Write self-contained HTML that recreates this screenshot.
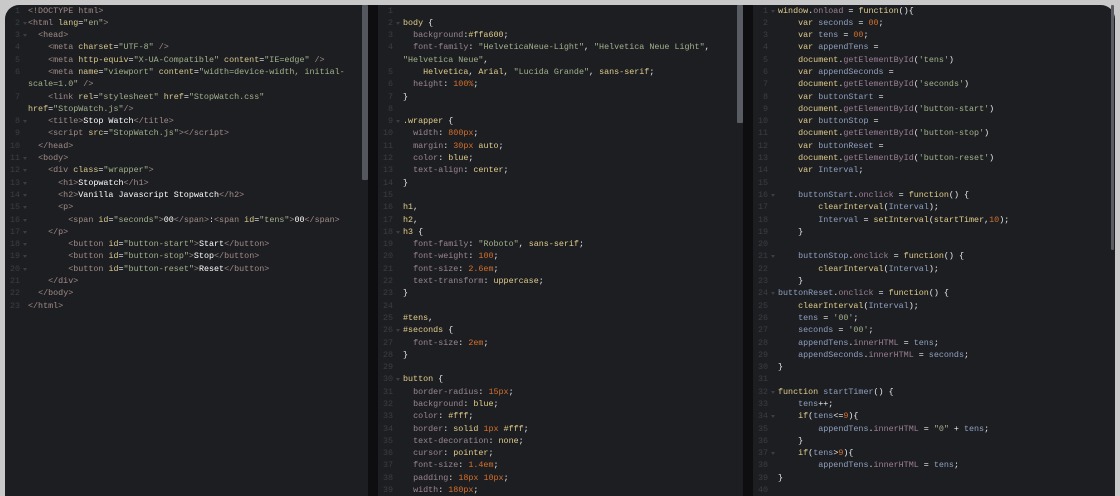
<!DOCTYPE html>
<html><head><meta charset="utf-8"><style>
*{margin:0;padding:0;box-sizing:border-box}
body{width:1120px;height:496px;background:#c9c9c9;position:relative;overflow:hidden;font-family:"Liberation Mono",monospace;font-size:8.4px;color:#e8e8e8}
.p{position:absolute;top:5px;bottom:0;background:#1d1e22;overflow:hidden}
.sep{position:absolute;top:5px;bottom:0;background:#0e0e10}
.sb{position:absolute;background:#5a5c63;border-radius:1px}
.code{position:absolute;top:4.5px;left:0;right:0}
.r{height:12.3px;line-height:12.3px;white-space:pre;position:relative}
.n{position:absolute;text-align:right;color:#3c3d43;width:16px}
.f::after{content:"";position:absolute;right:-7px;top:5px;border-left:2px solid transparent;border-right:2px solid transparent;border-top:3px solid #3c3d43}
.t{color:#a08b87}.a{color:#d8c88c}.s{color:#a2b28b}.w{color:#ffffff}
.k{color:#e0cc8a}.pr{color:#9a8690}.num{color:#d6702c}.v{color:#8fa0bf}.m{color:#9c7f95}
</style></head><body>

<div class="p" style="left:5px;width:363px;border-top-left-radius:14px"></div>
<div class="sb" style="left:362px;top:5px;width:6px;height:175px;background:#55575e"></div>
<div class="sep" style="left:368px;width:10px"></div>
<div class="p" style="left:378px;width:365px"></div>
<div class="sb" style="left:737px;top:5px;width:6px;height:118px"></div>
<div class="sep" style="left:743px;width:10px"></div>
<div class="p" style="left:753px;width:362px;border-top-right-radius:14px"></div>
<div class="sb" style="left:1111px;top:5px;width:3px;height:245px"></div>

<div class="code" style="left:28px;width:330px">
<div class="r"><span class="n" style="left:-24px">1</span><span class="t">&lt;!DOCTYPE html&gt;</span></div>
<div class="r"><span class="n f" style="left:-24px">2</span><span class="t">&lt;html </span><span class="a">lang</span>=<span class="s">"en"</span><span class="t">&gt;</span></div>
<div class="r"><span class="n f" style="left:-24px">3</span>  <span class="t">&lt;head&gt;</span></div>
<div class="r"><span class="n" style="left:-24px">4</span>    <span class="t">&lt;meta </span><span class="a">charset</span>=<span class="s">"UTF-8"</span><span class="t"> /&gt;</span></div>
<div class="r"><span class="n" style="left:-24px">5</span>    <span class="t">&lt;meta </span><span class="a">http-equiv</span>=<span class="s">"X-UA-Compatible"</span> <span class="a">content</span>=<span class="s">"IE=edge"</span><span class="t"> /&gt;</span></div>
<div class="r"><span class="n" style="left:-24px">6</span>    <span class="t">&lt;meta </span><span class="a">name</span>=<span class="s">"viewport"</span> <span class="a">content</span>=<span class="s">"width=device-width, initial-</span></div>
<div class="r"><span class="s">scale=1.0"</span><span class="t"> /&gt;</span></div>
<div class="r"><span class="n" style="left:-24px">7</span>    <span class="t">&lt;link </span><span class="a">rel</span>=<span class="s">"stylesheet"</span> <span class="a">href</span>=<span class="s">"StopWatch.css"</span></div>
<div class="r"><span class="a">href</span>=<span class="s">"StopWatch.js"</span><span class="t">/&gt;</span></div>
<div class="r"><span class="n f" style="left:-24px">8</span>    <span class="t">&lt;title&gt;</span><span class="w">Stop Watch</span><span class="t">&lt;/title&gt;</span></div>
<div class="r"><span class="n" style="left:-24px">9</span>    <span class="t">&lt;script </span><span class="a">src</span>=<span class="s">"StopWatch.js"</span><span class="t">&gt;&lt;/script&gt;</span></div>
<div class="r"><span class="n" style="left:-24px">10</span>  <span class="t">&lt;/head&gt;</span></div>
<div class="r"><span class="n f" style="left:-24px">11</span>  <span class="t">&lt;body&gt;</span></div>
<div class="r"><span class="n f" style="left:-24px">12</span>    <span class="t">&lt;div </span><span class="a">class</span>=<span class="s">"wrapper"</span><span class="t">&gt;</span></div>
<div class="r"><span class="n f" style="left:-24px">13</span>      <span class="t">&lt;h1&gt;</span><span class="w">Stopwatch</span><span class="t">&lt;/h1&gt;</span></div>
<div class="r"><span class="n f" style="left:-24px">14</span>      <span class="t">&lt;h2&gt;</span><span class="w">Vanilla Javascript Stopwatch</span><span class="t">&lt;/h2&gt;</span></div>
<div class="r"><span class="n f" style="left:-24px">15</span>      <span class="t">&lt;p&gt;</span></div>
<div class="r"><span class="n f" style="left:-24px">16</span>        <span class="t">&lt;span </span><span class="a">id</span>=<span class="s">"seconds"</span><span class="t">&gt;</span><span class="w">00</span><span class="t">&lt;/span&gt;</span>:<span class="t">&lt;span </span><span class="a">id</span>=<span class="s">"tens"</span><span class="t">&gt;</span><span class="w">00</span><span class="t">&lt;/span&gt;</span></div>
<div class="r"><span class="n f" style="left:-24px">17</span>    <span class="t">&lt;/p&gt;</span></div>
<div class="r"><span class="n f" style="left:-24px">18</span>        <span class="t">&lt;button </span><span class="a">id</span>=<span class="s">"button-start"</span><span class="t">&gt;</span><span class="w">Start</span><span class="t">&lt;/button&gt;</span></div>
<div class="r"><span class="n f" style="left:-24px">19</span>        <span class="t">&lt;button </span><span class="a">id</span>=<span class="s">"button-stop"</span><span class="t">&gt;</span><span class="w">Stop</span><span class="t">&lt;/button&gt;</span></div>
<div class="r"><span class="n f" style="left:-24px">20</span>        <span class="t">&lt;button </span><span class="a">id</span>=<span class="s">"button-reset"</span><span class="t">&gt;</span><span class="w">Reset</span><span class="t">&lt;/button&gt;</span></div>
<div class="r"><span class="n" style="left:-24px">21</span>    <span class="t">&lt;/div&gt;</span></div>
<div class="r"><span class="n" style="left:-24px">22</span>  <span class="t">&lt;/body&gt;</span></div>
<div class="r"><span class="n" style="left:-24px">23</span><span class="t">&lt;/html&gt;</span></div>
</div>

<div class="code" style="left:403px;width:330px">
<div class="r"><span class="n" style="left:-26px">1</span></div>
<div class="r"><span class="n f" style="left:-26px">2</span><span class="k">body</span> {</div>
<div class="r"><span class="n" style="left:-26px">3</span>  <span class="pr">background</span>:<span class="k">#ffa600</span>;</div>
<div class="r"><span class="n" style="left:-26px">4</span>  <span class="pr">font-family</span>: <span class="s">"HelveticaNeue-Light"</span>, <span class="s">"Helvetica Neue Light"</span>,</div>
<div class="r"><span class="s">"Helvetica Neue"</span>,</div>
<div class="r"><span class="n" style="left:-26px">5</span>    <span class="k">Helvetica</span>, <span class="k">Arial</span>, <span class="s">"Lucida Grande"</span>, <span class="k">sans-serif</span>;</div>
<div class="r"><span class="n" style="left:-26px">6</span>  <span class="pr">height</span>: <span class="num">100%</span>;</div>
<div class="r"><span class="n" style="left:-26px">7</span>}</div>
<div class="r"><span class="n" style="left:-26px">8</span></div>
<div class="r"><span class="n f" style="left:-26px">9</span><span class="k">.wrapper</span> {</div>
<div class="r"><span class="n" style="left:-26px">10</span>  <span class="pr">width</span>: <span class="num">800px</span>;</div>
<div class="r"><span class="n" style="left:-26px">11</span>  <span class="pr">margin</span>: <span class="num">30px</span> <span class="k">auto</span>;</div>
<div class="r"><span class="n" style="left:-26px">12</span>  <span class="pr">color</span>: <span class="k">blue</span>;</div>
<div class="r"><span class="n" style="left:-26px">13</span>  <span class="pr">text-align</span>: <span class="k">center</span>;</div>
<div class="r"><span class="n" style="left:-26px">14</span>}</div>
<div class="r"><span class="n" style="left:-26px">15</span></div>
<div class="r"><span class="n" style="left:-26px">16</span><span class="k">h1</span>,</div>
<div class="r"><span class="n" style="left:-26px">17</span><span class="k">h2</span>,</div>
<div class="r"><span class="n f" style="left:-26px">18</span><span class="k">h3</span> {</div>
<div class="r"><span class="n" style="left:-26px">19</span>  <span class="pr">font-family</span>: <span class="s">"Roboto"</span>, <span class="k">sans-serif</span>;</div>
<div class="r"><span class="n" style="left:-26px">20</span>  <span class="pr">font-weight</span>: <span class="num">100</span>;</div>
<div class="r"><span class="n" style="left:-26px">21</span>  <span class="pr">font-size</span>: <span class="num">2.6em</span>;</div>
<div class="r"><span class="n" style="left:-26px">22</span>  <span class="pr">text-transform</span>: <span class="k">uppercase</span>;</div>
<div class="r"><span class="n" style="left:-26px">23</span>}</div>
<div class="r"><span class="n" style="left:-26px">24</span></div>
<div class="r"><span class="n" style="left:-26px">25</span><span class="k">#tens</span>,</div>
<div class="r"><span class="n f" style="left:-26px">26</span><span class="k">#seconds</span> {</div>
<div class="r"><span class="n" style="left:-26px">27</span>  <span class="pr">font-size</span>: <span class="num">2em</span>;</div>
<div class="r"><span class="n" style="left:-26px">28</span>}</div>
<div class="r"><span class="n" style="left:-26px">29</span></div>
<div class="r"><span class="n f" style="left:-26px">30</span><span class="k">button</span> {</div>
<div class="r"><span class="n" style="left:-26px">31</span>  <span class="pr">border-radius</span>: <span class="num">15px</span>;</div>
<div class="r"><span class="n" style="left:-26px">32</span>  <span class="pr">background</span>: <span class="k">blue</span>;</div>
<div class="r"><span class="n" style="left:-26px">33</span>  <span class="pr">color</span>: <span class="k">#fff</span>;</div>
<div class="r"><span class="n" style="left:-26px">34</span>  <span class="pr">border</span>: <span class="k">solid</span> <span class="num">1px</span> <span class="k">#fff</span>;</div>
<div class="r"><span class="n" style="left:-26px">35</span>  <span class="pr">text-decoration</span>: <span class="k">none</span>;</div>
<div class="r"><span class="n" style="left:-26px">36</span>  <span class="pr">cursor</span>: <span class="k">pointer</span>;</div>
<div class="r"><span class="n" style="left:-26px">37</span>  <span class="pr">font-size</span>: <span class="num">1.4em</span>;</div>
<div class="r"><span class="n" style="left:-26px">38</span>  <span class="pr">padding</span>: <span class="num">18px</span> <span class="num">10px</span>;</div>
<div class="r"><span class="n" style="left:-26px">39</span>  <span class="pr">width</span>: <span class="num">180px</span>;</div>
</div>

<div class="code" style="left:778px;width:330px">
<div class="r"><span class="n f" style="left:-26px">1</span><span class="k">window</span>.<span class="m">onload</span> = <span class="k">function</span>(){</div>
<div class="r"><span class="n" style="left:-26px">2</span>    <span class="k">var</span> <span class="v">seconds</span> = <span class="num">00</span>;</div>
<div class="r"><span class="n" style="left:-26px">3</span>    <span class="k">var</span> <span class="v">tens</span> = <span class="num">00</span>;</div>
<div class="r"><span class="n" style="left:-26px">4</span>    <span class="k">var</span> <span class="v">appendTens</span> =</div>
<div class="r"><span class="n" style="left:-26px">5</span>    <span class="k">document</span>.<span class="m">getElementById</span>(<span class="s">'tens'</span>)</div>
<div class="r"><span class="n" style="left:-26px">6</span>    <span class="k">var</span> <span class="v">appendSeconds</span> =</div>
<div class="r"><span class="n" style="left:-26px">7</span>    <span class="k">document</span>.<span class="m">getElementById</span>(<span class="s">'seconds'</span>)</div>
<div class="r"><span class="n" style="left:-26px">8</span>    <span class="k">var</span> <span class="v">buttonStart</span> =</div>
<div class="r"><span class="n" style="left:-26px">9</span>    <span class="k">document</span>.<span class="m">getElementById</span>(<span class="s">'button-start'</span>)</div>
<div class="r"><span class="n" style="left:-26px">10</span>    <span class="k">var</span> <span class="v">buttonStop</span> =</div>
<div class="r"><span class="n" style="left:-26px">11</span>    <span class="k">document</span>.<span class="m">getElementById</span>(<span class="s">'button-stop'</span>)</div>
<div class="r"><span class="n" style="left:-26px">12</span>    <span class="k">var</span> <span class="v">buttonReset</span> =</div>
<div class="r"><span class="n" style="left:-26px">13</span>    <span class="k">document</span>.<span class="m">getElementById</span>(<span class="s">'button-reset'</span>)</div>
<div class="r"><span class="n" style="left:-26px">14</span>    <span class="k">var</span> <span class="v">Interval</span>;</div>
<div class="r"><span class="n" style="left:-26px">15</span></div>
<div class="r"><span class="n f" style="left:-26px">16</span>    <span class="v">buttonStart</span>.<span class="m">onclick</span> = <span class="k">function</span>() {</div>
<div class="r"><span class="n" style="left:-26px">17</span>        <span class="k">clearInterval</span>(<span class="v">Interval</span>);</div>
<div class="r"><span class="n" style="left:-26px">18</span>        <span class="v">Interval</span> = <span class="k">setInterval</span>(<span class="k">startTimer</span>,<span class="num">10</span>);</div>
<div class="r"><span class="n" style="left:-26px">19</span>    }</div>
<div class="r"><span class="n" style="left:-26px">20</span></div>
<div class="r"><span class="n f" style="left:-26px">21</span>    <span class="v">buttonStop</span>.<span class="m">onclick</span> = <span class="k">function</span>() {</div>
<div class="r"><span class="n" style="left:-26px">22</span>        <span class="k">clearInterval</span>(<span class="v">Interval</span>);</div>
<div class="r"><span class="n" style="left:-26px">23</span>    }</div>
<div class="r"><span class="n f" style="left:-26px">24</span><span class="v">buttonReset</span>.<span class="m">onclick</span> = <span class="k">function</span>() {</div>
<div class="r"><span class="n" style="left:-26px">25</span>    <span class="k">clearInterval</span>(<span class="v">Interval</span>);</div>
<div class="r"><span class="n" style="left:-26px">26</span>    <span class="v">tens</span> = <span class="s">'00'</span>;</div>
<div class="r"><span class="n" style="left:-26px">27</span>    <span class="v">seconds</span> = <span class="s">'00'</span>;</div>
<div class="r"><span class="n" style="left:-26px">28</span>    <span class="v">appendTens</span>.<span class="m">innerHTML</span> = <span class="v">tens</span>;</div>
<div class="r"><span class="n" style="left:-26px">29</span>    <span class="v">appendSeconds</span>.<span class="m">innerHTML</span> = <span class="v">seconds</span>;</div>
<div class="r"><span class="n" style="left:-26px">30</span>}</div>
<div class="r"><span class="n" style="left:-26px">31</span></div>
<div class="r"><span class="n f" style="left:-26px">32</span><span class="k">function</span> <span class="v">startTimer</span>() {</div>
<div class="r"><span class="n" style="left:-26px">33</span>    <span class="v">tens</span>++;</div>
<div class="r"><span class="n f" style="left:-26px">34</span>    <span class="k">if</span>(<span class="v">tens</span>&lt;=<span class="num">9</span>){</div>
<div class="r"><span class="n" style="left:-26px">35</span>        <span class="v">appendTens</span>.<span class="m">innerHTML</span> = <span class="s">"0"</span> + <span class="v">tens</span>;</div>
<div class="r"><span class="n" style="left:-26px">36</span>    }</div>
<div class="r"><span class="n f" style="left:-26px">37</span>    <span class="k">if</span>(<span class="v">tens</span>&gt;<span class="num">9</span>){</div>
<div class="r"><span class="n" style="left:-26px">38</span>        <span class="v">appendTens</span>.<span class="m">innerHTML</span> = <span class="v">tens</span>;</div>
<div class="r"><span class="n" style="left:-26px">39</span>}</div>
<div class="r"><span class="n" style="left:-26px">40</span></div>
</div>
</body></html>
